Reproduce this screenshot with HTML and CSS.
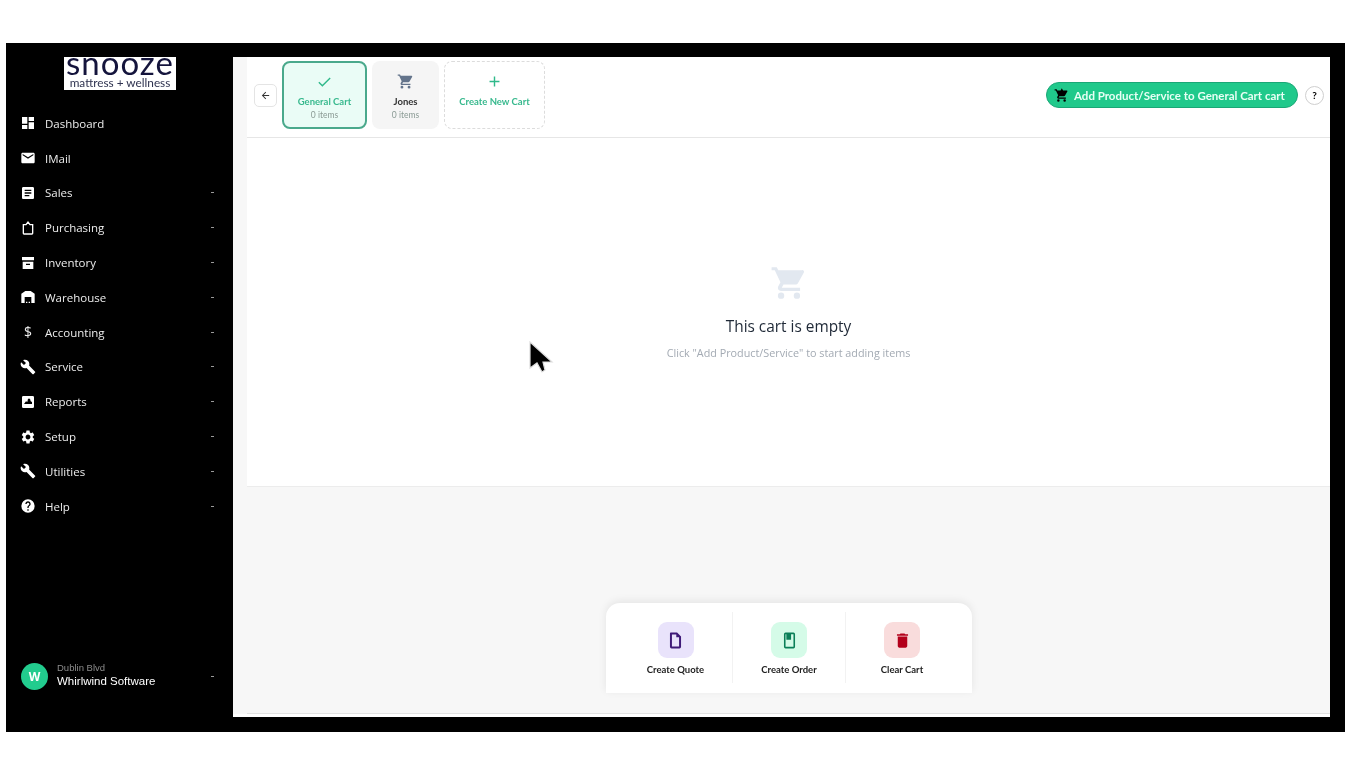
FILE: index.html
```html
<!DOCTYPE html>
<html>
  <head>
    <meta charset="utf-8">
    <title>Cart</title>
    <link rel="stylesheet" href="styles.css">
  </head>
  <body>
    <div class="frame">
      <aside class="sidebar">
        <div class="logo">
          <div class="logo-name">snooze</div>
          <div class="logo-sub">mattress + wellness</div>
        </div>
        <nav class="nav">
          <div class="nav-item">
            <svg class="nav-icon" viewBox="0 0 24 24"><path d="M3 13h8V3H3zm0 8h8v-6H3zm10 0h8V11h-8zm0-18v6h8V3z"/></svg>
            <span>Dashboard</span>
          </div>
          <div class="nav-item">
            <svg class="nav-icon" viewBox="0 0 24 24"><path d="M20 4H4c-1.1 0-2 .9-2 2v12c0 1.1.9 2 2 2h16c1.100 0 2-.9 2-2V6c0-1.100-.9-2-2-2zm0 4l-8 5-8-5V6l8 5 8-5z"/></svg>
            <span>IMail</span>
          </div>
          <div class="nav-item">
            <svg class="nav-icon" viewBox="0 0 24 24"><path d="M19 3H5c-1.100 0-2 .9-2 2v14c0 1.100.9 2 2 2h14c1.100 0 2-.9 2-2V5c0-1.100-.9-2-2-2zm-5 14H7v-2h7zm3-4H7v-2h10zm0-4H7V7h10z"/></svg>
            <span>Sales</span><i class="nav-arrow"></i>
          </div>
          <div class="nav-item">
            <svg class="nav-icon" viewBox="0 0 24 24"><path d="M9 7l3-4 3 4h4v13a1 1 0 0 1-1 1H6a1 1 0 0 1-1-1V7z" fill="none" stroke="#fff" stroke-width="2"/></svg>
            <span>Purchasing</span><i class="nav-arrow"></i>
          </div>
          <div class="nav-item">
            <svg class="nav-icon" viewBox="0 0 24 24"><path d="M3 3h18v5H3zm1 7h16v11H4zm5 3v2h6v-2z" fill-rule="evenodd"/></svg>
            <span>Inventory</span><i class="nav-arrow"></i>
          </div>
          <div class="nav-item">
            <svg class="nav-icon" viewBox="0 0 24 24"><path d="M22 21V7l-6-4H8L2 7v14h5v-9h10v9zm-11-2H9v2h2zm4 0h-2v2h2z"/></svg>
            <span>Warehouse</span><i class="nav-arrow"></i>
          </div>
          <div class="nav-item">
            <span class="nav-icon nav-dollar">$</span>
            <span>Accounting</span><i class="nav-arrow"></i>
          </div>
          <div class="nav-item">
            <svg class="nav-icon" viewBox="0 0 24 24"><path d="M22.700 19l-9.100-9.100c.9-2.300.4-5-1.500-6.900-2-2-5-2.400-7.400-1.300L9 6 6 9 1.600 4.700C.4 7.100.9 10.100 2.900 12.100c1.900 1.900 4.600 2.400 6.900 1.500l9.100 9.100c.4.400 1 .4 1.400 0l2.300-2.300c.5-.4.5-1.100.1-1.400z"/></svg>
            <span>Service</span><i class="nav-arrow"></i>
          </div>
          <div class="nav-item">
            <svg class="nav-icon" viewBox="0 0 24 24"><path d="M5 3h14a2 2 0 0 1 2 2v14a2 2 0 0 1-2 2H5a2 2 0 0 1-2-2V5a2 2 0 0 1 2-2zm1 12h12v-3l-2-1-1-4h-3l-1 5-2-1z" fill-rule="evenodd"/></svg>
            <span>Reports</span><i class="nav-arrow"></i>
          </div>
          <div class="nav-item">
            <svg class="nav-icon" viewBox="0 0 24 24"><path d="M19.140 12.940c.04-.3.06-.61.06-.94 0-.32-.02-.64-.07-.94l2.030-1.580c.18-.14.23-.41.12-.61l-1.920-3.320c-.12-.22-.37-.29-.59-.22l-2.390.96c-.5-.38-1.030-.7-1.620-.94l-.36-2.540c-.04-.24-.24-.41-.48-.41h-3.840c-.24 0-.43.17-.47.41l-.36 2.540c-.59.24-1.130.57-1.620.94l-2.390-.96c-.22-.08-.47 0-.59.22L2.740 8.870c-.12.21-.08.47.12.61l2.030 1.580c-.05.3-.09.63-.09.94s.02.64.07.94l-2.030 1.580c-.18.14-.23.41-.12.61l1.920 3.320c.12.22.37.29.59.22l2.390-.96c.5.38 1.030.7 1.620.94l.36 2.540c.05.24.24.41.48.41h3.840c.24 0 .44-.17.47-.41l.36-2.540c.59-.24 1.130-.56 1.620-.94l2.390.96c.22.08.47 0 .59-.22l1.920-3.320c.12-.22.07-.47-.12-.61zM12 15.600c-1.980 0-3.600-1.620-3.600-3.600s1.620-3.600 3.600-3.600 3.600 1.620 3.600 3.600-1.620 3.600-3.600 3.600z"/></svg>
            <span>Setup</span><i class="nav-arrow"></i>
          </div>
          <div class="nav-item">
            <svg class="nav-icon" viewBox="0 0 24 24"><path d="M22.700 19l-9.100-9.100c.9-2.300.4-5-1.500-6.900-2-2-5-2.400-7.400-1.300L9 6 6 9 1.600 4.700C.4 7.100.9 10.100 2.900 12.100c1.900 1.900 4.600 2.400 6.900 1.500l9.100 9.100c.4.400 1 .4 1.400 0l2.300-2.300c.5-.4.5-1.100.1-1.400z"/></svg>
            <span>Utilities</span><i class="nav-arrow"></i>
          </div>
          <div class="nav-item">
            <svg class="nav-icon" viewBox="0 0 24 24"><path d="M12 2a10 10 0 1 0 0 20 10 10 0 0 0 0-20zm1 17h-2v-2h2zm2.070-7.750l-.9.92C13.450 12.900 13 13.500 13 15h-2v-.5c0-1.100.45-2.100 1.170-2.830l1.240-1.260c.37-.36.59-.86.59-1.410 0-1.100-.9-2-2-2s-2 .9-2 2H8c0-2.210 1.790-4 4-4s4 1.790 4 4c0 .88-.36 1.680-.93 2.250z"/></svg>
            <span>Help</span><i class="nav-arrow"></i>
          </div>
        </nav>
        <div class="account">
          <div class="avatar">W</div>
          <div class="account-text">
            <div class="account-place">Dublin Blvd</div>
            <div class="account-name">Whirlwind Software</div>
          </div>
          <i class="nav-arrow"></i>
        </div>
      </aside>

      <main class="main">
        <header class="cart-bar">
          <button class="back-button">
            <svg viewBox="0 0 24 24"><path d="M20 11H7.800l5.600-5.600L12 4l-8 8 8 8 1.400-1.400L7.800 13H20z"/></svg>
          </button>
          <div class="cart-tab active">
            <svg class="tab-icon" viewBox="0 0 24 24"><path d="M4 13l5 5L20 7" fill="none" stroke="#2fb98a" stroke-width="2"/></svg>
            <div class="tab-name">General Cart</div>
            <div class="tab-count">0 items</div>
          </div>
          <div class="cart-tab idle">
            <svg class="tab-icon cart-grey" viewBox="0 0 24 24"><path d="M7 18a2 2 0 1 0 0 4 2 2 0 0 0 0-4zM1 2v2h2l3.600 7.590-1.350 2.450C4.500 15.400 5.500 17 7 17h12v-2H7.420l1.100-2h7.450c.75 0 1.410-.41 1.750-1.030l3.580-6.490A1 1 0 0 0 20.010 4H5.210l-.94-2zm16 16a2 2 0 1 0 0 4 2 2 0 0 0 0-4z"/></svg>
            <div class="tab-name">Jones</div>
            <div class="tab-count">0 items</div>
          </div>
          <div class="cart-tab create">
            <svg class="tab-icon" viewBox="0 0 24 24"><path d="M12 5v14M5 12h14" fill="none" stroke="#2fb98a" stroke-width="2"/></svg>
            <div class="tab-name">Create New Cart</div>
          </div>
          <button class="add-button">
            <svg viewBox="0 0 24 24"><path d="M7 18a2 2 0 1 0 0 4 2 2 0 0 0 0-4zM1 2v2h2l3.600 7.590-1.350 2.450C4.500 15.400 5.500 17 7 17h12v-2H7.420l1.100-2h7.450c.75 0 1.410-.41 1.750-1.030l3.580-6.490A1 1 0 0 0 20.010 4H14.500L12.500 .5 10.500 4H5.210l-.94-2zm16 16a2 2 0 1 0 0 4 2 2 0 0 0 0-4z"/></svg>
            Add Product/Service to General Cart cart
          </button>
          <div class="help-dot">?</div>
        </header>

        <section class="cart-panel">
          <svg class="empty-icon" viewBox="0 0 24 24"><path d="M7 18a2 2 0 1 0 0 4 2 2 0 0 0 0-4zM1 2v2h2l3.600 7.590-1.350 2.450C4.500 15.400 5.500 17 7 17h12v-2H7.420l1.100-2h7.450c.75 0 1.410-.41 1.750-1.030l3.580-6.490A1 1 0 0 0 20.010 4H5.210l-.94-2zm16 16a2 2 0 1 0 0 4 2 2 0 0 0 0-4z"/></svg>
          <h2 class="empty-title">This cart is empty</h2>
          <p class="empty-text">Click "Add Product/Service" to start adding items</p>
        </section>

        <section class="lower">
          <div class="actions">
            <div class="action">
              <div class="action-icon quote">
                <svg viewBox="0 0 24 24"><path d="M6 2h8l5 5v13a2 2 0 0 1-2 2H7a2 2 0 0 1-2-2V3a1 1 0 0 1 1-1zm1.500 2.500v15h9V8H13V4.500z" fill-rule="evenodd"/></svg>
              </div>
              <div class="action-label">Create Quote</div>
            </div>
            <div class="action">
              <div class="action-icon order">
                <svg viewBox="0 0 24 24"><path d="M7 2h10a2 2 0 0 1 2 2v16a2 2 0 0 1-2 2H7a2 2 0 0 1-2-2V4a2 2 0 0 1 2-2zm0 2.200v15.600h10V4.200h-3V11H8V4.200z" fill-rule="evenodd"/></svg>
              </div>
              <div class="action-label">Create Order</div>
            </div>
            <div class="action">
              <div class="action-icon clear">
                <svg viewBox="0 0 24 24"><path d="M6 19c0 1.100.9 2 2 2h8c1.100 0 2-.9 2-2V7H6zM19 4h-3.500l-1-1h-5l-1 1H5v2h14z"/></svg>
              </div>
              <div class="action-label">Clear Cart</div>
            </div>
          </div>
        </section>
        <div class="main-foot"></div>
      </main>

      <svg class="pointer" viewBox="0 0 26 36"><path d="M2 1v26l7-5 5 9 3-2-2-8h9z" stroke="#ddd" stroke-width="1.200"/></svg>
    </div>
  </body>
</html>
```

FILE: styles.css
```css
* {
  box-sizing: border-box;
}

body {
  margin: 0;
  background: #fff;
  font-family: "Lato", "Liberation Sans", sans-serif;
  overflow: hidden;
}

.frame {
  position: relative;
  display: flex;
  width: 1339px;
  height: 689px;
  margin: 43px 0 0 6px;
  background: #000;
  filter: blur(0.35px);
}

/* sidebar */
.sidebar {
  display: flex;
  flex-direction: column;
  flex: none;
  width: 227px;
  padding-top: 14px;
  color: #fff;
  font-family: "Open Sans", "Liberation Sans", sans-serif;
  font-size: 11.500px;
}

.logo {
  width: 112px;
  height: 33px;
  margin: 0 0 16px 58px;
  background: #fff;
  color: #14143c;
  font-family: "Lato", sans-serif;
  overflow: hidden;
  text-align: center;
  white-space: nowrap;
}

.logo-name {
  margin-top: -5px;
  font-size: 33px;
  letter-spacing: 1px;
  line-height: 20px;
}

.logo-sub {
  margin-top: 4px;
  font-size: 11.800px;
  line-height: 13px;
  color: #2f3350;
}

.nav-item {
  display: flex;
  align-items: center;
  gap: 9px;
  height: 34.800px;
  padding: 0 19px 0 14px;
  color: #ececec;
}

.nav-icon {
  flex: none;
  width: 16px;
  height: 16px;
  fill: #fff;
}

.nav-dollar {
  font-size: 14px;
  line-height: 16px;
  text-align: center;
}

.nav-arrow {
  width: 3px;
  height: 1px;
  margin-left: auto;
  background: #9a9a9a;
}

.account {
  display: flex;
  align-items: center;
  gap: 9px;
  margin-top: auto;
  padding: 0 19px 42px 15px;
}

.avatar {
  flex: none;
  width: 27px;
  height: 27px;
  border-radius: 50%;
  background: #22cc8e;
  font-size: 12px;
  font-weight: 700;
  line-height: 27px;
  text-align: center;
}

.account-text {
  margin-bottom: 2px;
  font-family: "Liberation Sans", sans-serif;
}

.account-place {
  color: #8c8c8c;
  font-size: 9.500px;
  line-height: 12px;
}

.account-name {
  font-size: 11.500px;
  line-height: 14px;
}

/* main */
.main {
  display: flex;
  flex-direction: column;
  width: 1097px;
  margin: 14px 0 15px;
  padding-left: 14px;
  background: #f7f7f7;
}

.cart-bar {
  display: flex;
  align-items: center;
  gap: 5px;
  height: 81px;
  padding: 0 16px 4px 7px;
  background: #fff;
  border-bottom: 1px solid #e6e6e6;
}

.back-button {
  display: flex;
  align-items: center;
  justify-content: center;
  width: 23px;
  height: 23px;
  padding: 0;
  background: #fff;
  border: 1px solid #e4e4e4;
  border-radius: 5px;
}

.back-button svg {
  width: 11px;
  height: 11px;
  fill: #333;
}

.cart-tab {
  display: flex;
  flex-direction: column;
  align-items: center;
  height: 68px;
  padding-top: 12px;
  border-radius: 8px;
  font-size: 9.500px;
  font-weight: 700;
}

.tab-icon {
  width: 17px;
  height: 17px;
  margin-bottom: 6px;
}

.tab-name {
  line-height: 12px;
}

.tab-count {
  margin-top: 2px;
  font-size: 8.500px;
  font-weight: 400;
  line-height: 11px;
  color: #8a9a94;
}

.cart-tab.active {
  width: 85px;
  background: #eafcf6;
  border: 2px solid #4aa98c;
  padding-top: 10px;
  color: #38b98e;
}

.cart-tab.idle {
  width: 67px;
  background: #f5f5f5;
  color: #333;
}

.cart-grey {
  fill: #64748b;
}

.cart-tab.create {
  width: 101px;
  border: 1px dashed #dcdcdc;
  padding-top: 11px;
  color: #38b98e;
}

.add-button {
  display: flex;
  align-items: center;
  gap: 5px;
  width: 252px;
  height: 26px;
  margin-left: auto;
  padding: 0 0 0 7px;
  background: #20c98b;
  border: 1px solid #1aa776;
  border-radius: 13px;
  color: #e8fff5;
  font-family: "Lato", sans-serif;
  font-size: 11.500px;
  font-weight: 700;
  white-space: nowrap;
}

.add-button svg {
  flex: none;
  width: 15px;
  height: 15px;
}

.help-dot {
  flex: none;
  width: 19px;
  height: 19px;
  margin-left: 2px;
  margin-right: -10px;
  border: 1px solid #cfcfcf;
  border-radius: 50%;
  font-size: 10px;
  font-weight: 700;
  line-height: 17px;
  text-align: center;
}

.cart-panel {
  display: flex;
  flex-direction: column;
  align-items: center;
  height: 349px;
  padding-top: 126px;
  background: #fff;
  border-bottom: 1px solid #ececec;
}

.empty-icon {
  width: 38px;
  height: 38px;
  fill: #e2e8f0;
}

.empty-title {
  margin: 15px 0 0;
  font-family: "Open Sans", sans-serif;
  font-size: 15.400px;
  font-weight: 500;
  line-height: 20px;
  color: #1f2937;
}

.empty-text {
  margin: 9px 0 0;
  font-family: "Open Sans", sans-serif;
  font-size: 10.800px;
  line-height: 14px;
  color: #a3aab3;
}

.lower {
  display: flex;
  flex: 1;
  align-items: flex-end;
  justify-content: center;
  padding-bottom: 20px;
  border-bottom: 1px solid #e2e2e2;
}

.main-foot {
  flex: none;
  height: 3px;
  margin-left: -14px;
  background: #fff;
}

.actions {
  display: flex;
  width: 366px;
  height: 90px;
  padding: 9px 13px 10px 13.500px;
  background: #fff;
  border-radius: 14px 14px 0 0;
  box-shadow: 0 -2px 8px rgba(0, 0, 0, 0.08);
}

.action {
  display: flex;
  flex-direction: column;
  align-items: center;
  flex: none;
  width: 113px;
  padding-top: 10px;
  border-left: 1px solid #f2f2f2;
}

.action:first-child {
  border-left: 0;
}

.action-icon {
  display: flex;
  align-items: center;
  justify-content: center;
  width: 36px;
  height: 36px;
  border-radius: 9px;
}

.action-icon svg {
  width: 19px;
  height: 19px;
}

.quote {
  background: #e9e3fb;
  fill: #3f1a78;
}

.order {
  background: #d5fbe8;
  fill: #0b7f58;
}

.clear {
  background: #f9dcdc;
  fill: #b3001b;
}

.action-label {
  margin-top: 6px;
  font-size: 9.500px;
  font-weight: 700;
  line-height: 12px;
  color: #222;
}

/* captured mouse pointer */
.pointer {
  position: absolute;
  left: 522px;
  top: 298px;
  width: 26px;
  height: 36px;
}
```
